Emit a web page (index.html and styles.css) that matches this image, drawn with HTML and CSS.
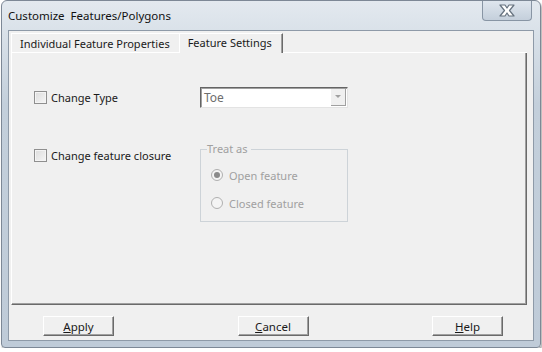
FILE: index.html
```html
<!DOCTYPE html>
<html lang="en">
<head>
  <meta charset="UTF-8">
  <meta name="viewport" content="width=device-width, initial-scale=1.0">
  <title>Customize Features/Polygons</title>
  <link rel="stylesheet" href="styles.css">
</head>
<body>
  <div class="window">
    <div class="titlebar">
      <span class="title">Customize&nbsp; Features/Polygons</span>
      <div class="close-btn">
        <svg width="22" height="15" viewBox="0 0 22 15">
          <path d="M4 2 L9 2 L11 5 L13 2 L18 2 L13.5 7.5 L18 13 L13 13 L11 10 L9 13 L4 13 L8.5 7.5 Z" fill="#fff" stroke="#66727f" stroke-width="1.2" stroke-linejoin="round"/>
        </svg>
      </div>
    </div>

    <div class="client">
      <div class="tabs">
        <div class="tab">Individual Feature Properties</div>
        <div class="tab active">Feature Settings</div>
      </div>

      <div class="panel">
        <div class="row row-type">
          <label class="check-label"><span class="checkbox"></span>Change Type</label>
          <div class="combo">
            <span class="combo-text">Toe</span>
            <span class="combo-btn"><span class="arrow"></span></span>
          </div>
        </div>

        <div class="row row-closure">
          <label class="check-label"><span class="checkbox"></span>Change feature closure</label>
          <fieldset class="group">
            <legend>Treat as</legend>
            <div class="radio-row"><span class="radio checked"></span>Open feature</div>
            <div class="radio-row"><span class="radio"></span>Closed feature</div>
          </fieldset>
        </div>
      </div>

      <div class="buttons">
        <button class="btn"><u>A</u>pply</button>
        <button class="btn"><u>C</u>ancel</button>
        <button class="btn"><u>H</u>elp</button>
      </div>
    </div>
  </div>
</body>
</html>
```

FILE: styles.css
```css
body {
  margin: 0;
  background: #fff;
  font-family: "Noto Sans", "Open Sans", sans-serif;
  font-size: 11px;
  color: #1a1a1a;
}

.window {
  width: 538px;
  height: 346px;
  margin-left: 1px;
  border: 1px solid #7d8896;
  border-radius: 6px 6px 4px 4px;
  background: linear-gradient(#e3e9ef, #c3cfdb 30%, #bfcbd8 100%);
  box-shadow: 1px 2px 2px rgba(0, 0, 0, 0.35);
  display: flex;
  flex-direction: column;
}

/* 제목 표시줄 */
.titlebar {
  height: 29px;
  display: flex;
  align-items: flex-start;
}
.title {
  padding: 7px 0 0 6px;
  font-size: 11.5px;
  color: #111;
}
.close-btn {
  margin-left: auto;
  margin-right: 8px;
  width: 48px;
  height: 19px;
  border: 1px solid #8895a4;
  border-top: none;
  border-radius: 0 0 4px 4px;
  background: linear-gradient(#dfe6ee, #c4cfdb);
  display: flex;
  justify-content: center;
  align-items: center;
}

/* 본문 영역 */
.client {
  flex: 1;
  margin: 0 6px 6px 6px;
  border: 1px solid #8e9aa8;
  background: #f0f0f0;
  display: flex;
  flex-direction: column;
}

.tabs {
  display: flex;
  padding: 2px 0 0 2px;
  height: 20px;
}
.tabs::after {
  content: "";
  flex: 1;
  margin-right: 6px;
  border-bottom: 1px solid #fff;
}
.tab {
  padding: 2px 9px 0 8px;
  border-top: 1px solid #fff;
  border-left: 1px solid #fff;
  border-bottom: 1px solid #fff;
  white-space: nowrap;
}
.tab.active {
  padding: 1px 10px 0 8px;
  border-bottom: none;
  border-right: 1px solid #6a6a6a;
  box-shadow: inset -1px 0 0 #a0a0a0;
}

.panel {
  height: 252px;
  margin: 0 6px 0 2px;
  border-left: 1px solid #fff;
  border-right: 1px solid #6a6a6a;
  border-bottom: 1px solid #6a6a6a;
  box-shadow: inset -1px -1px 0 #a0a0a0;
  padding: 33px 0 0 22px;
  box-sizing: border-box;
}

.row {
  display: flex;
}
.row-type {
  align-items: center;
  height: 22px;
}
.row-closure {
  margin-top: 34px;
}
.check-label {
  width: 166px;
  display: flex;
  align-items: center;
}
.row-closure .check-label {
  padding-top: 6px;
  height: 15px;
}

.checkbox {
  width: 11px;
  height: 11px;
  border: 1px solid #8f8f8f;
  background: linear-gradient(135deg, #dcdcdc, #f6f6f6);
  box-shadow: inset 0 0 0 1px #f4f4f4;
  margin-right: 4px;
}

/* 콤보박스 */
.combo {
  width: 146px;
  height: 19px;
  border-top: 1px solid #646464;
  border-left: 1px solid #646464;
  border-right: 1px solid #e3e3e3;
  border-bottom: 1px solid #e3e3e3;
  box-shadow: inset 1px 1px 0 #a0a0a0;
  background: #fff;
  display: flex;
  align-items: center;
}
.combo-text {
  padding-left: 3px;
  color: #6d6d6d;
  font-size: 12px;
  flex: 1;
}
.combo-btn {
  width: 15px;
  height: 17px;
  margin-right: 1px;
  background: #f0f0f0;
  border-right: 1px solid #a0a0a0;
  border-bottom: 1px solid #a0a0a0;
  box-sizing: border-box;
  display: flex;
  justify-content: center;
  align-items: center;
}
.arrow {
  width: 0;
  height: 0;
  border-left: 3px solid transparent;
  border-right: 3px solid transparent;
  border-top: 3px solid #a0a0a0;
}

/* 그룹 박스 */
.group {
  margin: 0;
  padding: 11px 0 0 8px;
  width: 148px;
  height: 80px;
  box-sizing: border-box;
  border: 1px solid #cdd3d8;
  color: #a0a0a0;
}
.group legend {
  padding: 0 3px 0 0;
  margin-left: -2px;
  line-height: 14px;
}
.radio-row {
  display: flex;
  align-items: center;
  height: 16px;
  margin-bottom: 12px;
  margin-left: 2px;
}
.radio {
  width: 10px;
  height: 10px;
  border: 1px solid #b0b0b0;
  border-radius: 50%;
  background: #f4f4f4;
  margin-right: 6px;
  position: relative;
}
.radio.checked::after {
  content: "";
  position: absolute;
  left: 2px;
  top: 2px;
  width: 6px;
  height: 6px;
  border-radius: 50%;
  background: #8a8a8a;
}

/* 하단 버튼 */
.buttons {
  display: flex;
  justify-content: space-between;
  padding: 11px 30px 0 34px;
}
.btn {
  width: 71px;
  height: 20px;
  padding: 0;
  font-family: inherit;
  font-size: 11.5px;
  color: #1a1a1a;
  background: #f0f0f0;
  border-top: 1px solid #fff;
  border-left: 1px solid #fff;
  border-right: 1px solid #6a6a6a;
  border-bottom: 1px solid #6a6a6a;
  box-shadow: inset -1px -1px 0 #a0a0a0;
}
```
